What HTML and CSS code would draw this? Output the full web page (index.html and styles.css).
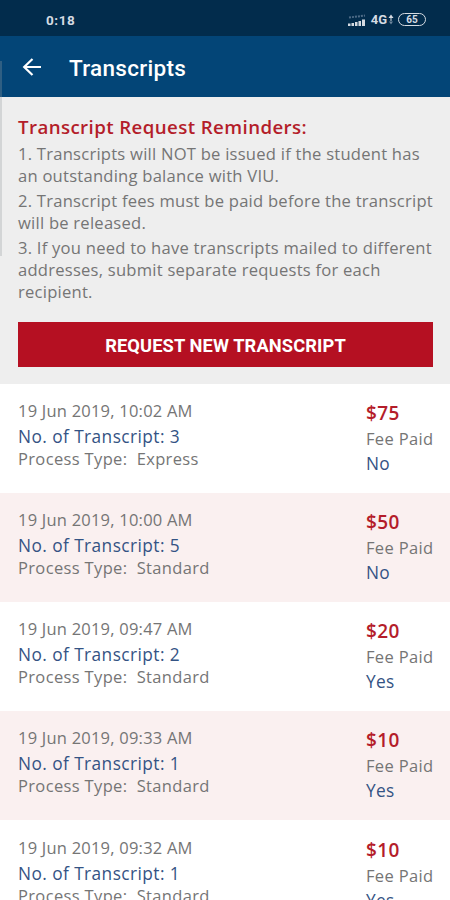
FILE: index.html
```html
<!DOCTYPE html>
<html lang="en"><head><meta charset="utf-8"><title>Transcripts</title><link rel="stylesheet" href="styles.css"></head>
<body>
<div class="status"><span class="time">0:18</span>
<svg class="signal" width="18" height="12" viewBox="0 0 18 12"><g fill="#d5dbe2"><rect x="0" y="9.500" width="2.500" height="2.500"/><rect x="3.500" y="9" width="2.500" height="3"/><rect x="7" y="8" width="2.500" height="4"/><rect x="10.500" y="7" width="2.500" height="5"/><rect x="14" y="5.500" width="3" height="6.500"/></g><path d="M1 3.500L17 1.500" stroke="#4d6b87" stroke-width="2" stroke-dasharray="2 1"/></svg>
<span class="net">4G</span>
<svg class="arrows" width="6" height="12" viewBox="0 0 6 12"><path d="M3 0.500L5.500 4h-5z" fill="#d5dbe2"/><path d="M3 4v3" stroke="#d5dbe2"/><path d="M3 10.500L5 7.500H1z" fill="#6f879d"/></svg>
<span class="battery">65</span></div>
<header class="bar"><svg class="back" width="20" height="20" viewBox="0 0 20 20"><path d="M19 10H2M10.500 2L2.200 10l8.300 8" stroke="#fff" stroke-width="2.200" fill="none"/></svg><h1>Transcripts</h1></header>
<section class="info"><h2>Transcript Request Reminders:</h2>
<p>1. Transcripts will NOT be issued if the student has<br>an outstanding balance with VIU.</p>
<p>2. Transcript fees must be paid before the transcript<br>will be released.</p>
<p>3. If you need to have transcripts mailed to different<br>addresses, submit separate requests for each<br>recipient.</p>
<button class="request">REQUEST NEW TRANSCRIPT</button></section>
<main>
<article class="row"><div><p class="date">19 Jun 2019, 10:02 AM</p><p class="count">No. of Transcript: 3</p><p class="type">Process Type:&nbsp; Express</p></div><div class="fee"><p class="price">$75</p><p class="label">Fee Paid</p><p class="paid">No</p></div></article>
<article class="row"><div><p class="date">19 Jun 2019, 10:00 AM</p><p class="count">No. of Transcript: 5</p><p class="type">Process Type:&nbsp; Standard</p></div><div class="fee"><p class="price">$50</p><p class="label">Fee Paid</p><p class="paid">No</p></div></article>
<article class="row"><div><p class="date">19 Jun 2019, 09:47 AM</p><p class="count">No. of Transcript: 2</p><p class="type">Process Type:&nbsp; Standard</p></div><div class="fee"><p class="price">$20</p><p class="label">Fee Paid</p><p class="paid">Yes</p></div></article>
<article class="row"><div><p class="date">19 Jun 2019, 09:33 AM</p><p class="count">No. of Transcript: 1</p><p class="type">Process Type:&nbsp; Standard</p></div><div class="fee"><p class="price">$10</p><p class="label">Fee Paid</p><p class="paid">Yes</p></div></article>
<article class="row"><div><p class="date">19 Jun 2019, 09:32 AM</p><p class="count">No. of Transcript: 1</p><p class="type">Process Type:&nbsp; Standard</p></div><div class="fee"><p class="price">$10</p><p class="label">Fee Paid</p><p class="paid">Yes</p></div></article>
</main><div class="edge"></div></body></html>
```
FILE: styles.css
```css
* { box-sizing: border-box; margin: 0; padding: 0; }
body { position: relative; height: 900px; overflow: hidden; background: #fff; font-family: "Open Sans", sans-serif; color: #757575; }
.status { display: flex; align-items: center; height: 36px; padding: 3px 24px 0 46px; background: #022c4c; color: #d5dbe2; font: 700 13px Roboto, sans-serif; }
.time { margin-right: auto; font-size: 13.500px; letter-spacing: .6px; }
.net { margin: 0 1px 0 5px; font-size: 13px; }
.battery { width: 28px; height: 13px; margin-left: 4px; border: 1.500px solid #d5dbe2; border-radius: 7px; font-size: 10px; line-height: 11px; text-align: center; }
.bar { display: flex; align-items: center; height: 61px; padding-left: 22px; background: #034577; color: #fff; }
h1 { margin-left: 27px; padding-top: 3px; font: 500 22.500px Roboto, sans-serif; letter-spacing: .3px; }
.info { height: 287px; padding: 18px 17px 0 18px; background: #eee; }
h2 { margin-bottom: 4px; font-size: 18.700px; line-height: 24px; font-weight: 600; letter-spacing: .4px; color: #b41d2a; white-space: nowrap; }
.info p { font-size: 16.600px; line-height: 22.200px; letter-spacing: .23px; margin-bottom: 2.400px; white-space: nowrap; }
.request { display: block; width: 100%; height: 45px; margin-top: 18.500px; padding-top: 2px; border: 0; background: #b51022; color: #fff; font: 700 18.300px Roboto, sans-serif; letter-spacing: .1px; }
.row { display: flex; justify-content: space-between; height: 109.100px; padding: 15.200px 0 0 18px; }
.row:nth-child(even) { background: #faf0f0; }
.row p { white-space: nowrap; font-size: 16.500px; letter-spacing: .35px; }
.fee { width: 84px; }
.row .date { line-height: 24px; letter-spacing: .22px; }
.row .count { line-height: 27px; font-size: 17.300px; letter-spacing: .43px; color: #345384; }
.row .type { line-height: 18px; }
.row .price { line-height: 28px; font-size: 19px; font-weight: 600; letter-spacing: .4px; color: #b41d2a; }
.row .label { line-height: 24px; }
.row .paid { line-height: 26px; font-size: 17.300px; color: #345384; }
.edge { position: absolute; left: 0; top: 61px; width: 2px; height: 195px; background: rgba(150, 155, 160, .3); }
```
